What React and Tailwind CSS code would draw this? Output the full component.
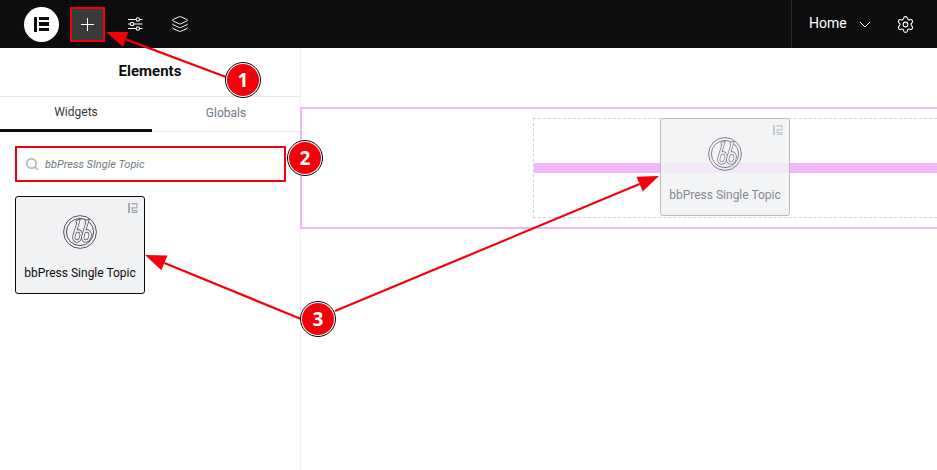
import React from 'react';
import { Layers, Search, Settings } from 'lucide-react';

const ElementorMark = () => (
  <svg width="10" height="10" viewBox="0 0 10 10" fill="#a9adb3">
    <rect x="0" y="0" width="2" height="10" />
    <path d="M3.5 0H9.5V5.5H5V7H9.5V10H3.5V8.8H8.2V8.2H3.5V4.2H8.2V1.4H3.5Z" />
  </svg>
);

const BbLogo = ({ bg = '#f1f2f4', color = '#3f4247' }) => {
  const b1 = 'M14 6.5 L15.5 6 L11 21 C9.5 27 15.5 27.5 17.5 23 C19.5 18.5 17 14.5 13 16.5';
  const b2 = 'M23 6.5 L24.5 6 L20 21 C18.5 27 24.5 27.5 26.5 23 C28.5 18.5 26 14.5 22 16.5';
  return (
    <svg width="34" height="34" viewBox="0 0 34 34" fill="none">
      <circle cx="17" cy="17" r="16.4" stroke={color} strokeWidth="0.9" />
      <circle cx="17" cy="17" r="13.6" stroke={color} strokeWidth="0.9" />
      <path d={b1} stroke={color} strokeWidth="3" strokeLinecap="round" />
      <path d={b1} stroke={bg} strokeWidth="1.7" strokeLinecap="round" />
      <path d={b2} stroke={color} strokeWidth="3" strokeLinecap="round" />
      <path d={b2} stroke={bg} strokeWidth="1.7" strokeLinecap="round" />
    </svg>
  );
};

const Arrow = ({ x1, y1, x2, y2 }) => {
  const len = Math.hypot(x2 - x1, y2 - y1);
  const ux = (x2 - x1) / len;
  const uy = (y2 - y1) / len;
  const bx = x2 - ux * 21;
  const by = y2 - uy * 21;
  const pts = `${x2},${y2} ${bx - uy * 8},${by + ux * 8} ${bx + uy * 8},${by - ux * 8}`;
  return (
    <g>
      <line x1={x1} y1={y1} x2={bx} y2={by} stroke="#f5000a" strokeWidth="2.2" />
      <polygon points={pts} fill="#f5000a" />
    </g>
  );
};

const Badge = ({ n, className }) => (
  <div className={`absolute w-9 h-9 rounded-full bg-white border border-black p-px ${className}`}>
    <div className="w-full h-full rounded-full bg-[#f5000a] flex items-center justify-center text-white font-bold text-[19px] font-['Open_Sans',sans-serif]">
      {n}
    </div>
  </div>
);

const App = () => {
  return (
    <div className="relative w-full h-[470px] overflow-hidden bg-white font-['Roboto',sans-serif]">
      <header className="h-12 bg-[#0c0d0e] flex items-center text-white">
        <div className="ml-6 w-[35px] h-[35px] rounded-full bg-white flex items-center gap-[2px] pl-[10px]">
          <div className="w-[3px] h-[15px] bg-[#0c0d0e]" />
          <div className="flex flex-col gap-[2.5px]">
            <div className="w-[10px] h-[3.3px] bg-[#0c0d0e]" />
            <div className="w-[10px] h-[3.3px] bg-[#0c0d0e]" />
            <div className="w-[10px] h-[3.3px] bg-[#0c0d0e]" />
          </div>
        </div>
        <div className="ml-[11px] w-[35px] h-[35px] bg-[#3a3a3a] border-2 border-[#f5000a] flex items-center justify-center">
          <svg width="13" height="13" viewBox="0 0 13 13" stroke="#fff" strokeWidth="1">
            <path d="M6.5 0V13M0 6.5H13" />
          </svg>
        </div>
        <div className="ml-[22px]">
          <svg width="16" height="16" viewBox="0 0 16 16" fill="none" stroke="#fff" strokeWidth="1.1" className="block">
            <path d="M1 3.5H9M12.5 3.5H15.5M1 8H3.5M7 8H15.5M1 12.5H9M12.5 12.5H15.5" />
            <circle cx="10.8" cy="3.5" r="1.7" />
            <circle cx="5.2" cy="8" r="1.7" />
            <circle cx="10.8" cy="12.5" r="1.7" />
          </svg>
        </div>
        <div className="ml-[28px]">
          <Layers size={18} strokeWidth={1.25} />
        </div>
        <div className="ml-auto h-12 w-[146px] border-l border-[#2d2e30] flex items-center">
          <span className="ml-[17px] text-sm pb-[2px]">Home</span>
          <svg width="12" height="7" viewBox="0 0 12 7" fill="none" stroke="#fff" strokeWidth="1" className="ml-[12px]">
            <path d="M1 1L6 6L11 1" />
          </svg>
          <Settings size={19} strokeWidth={1.35} className="ml-[25px]" />
        </div>
      </header>

      <div className="flex h-[422px]">
        <aside className="w-[301px] shrink-0 border-r border-[#f1f2f3]">
          <div className="h-12 flex items-center justify-center pb-[2px] text-[15px] font-bold text-[#0c0d0e]">
            Elements
          </div>
          <div className="flex h-9 border-y border-[#e6e8ea] text-xs">
            <div className="w-[152px] flex items-center justify-center pb-[2px] text-[#33373d] border-b-[3px] border-[#0c0d0e] -mb-px">
              Widgets
            </div>
            <div className="flex-1 flex items-center justify-center pb-[2px] text-[#6d7882]">Globals</div>
          </div>
          <div className="mx-[15px] mt-[14px] w-[271px] h-9 border-2 border-[#f5000a] flex items-center pl-[8px]">
            <Search size={14} strokeWidth={3.2} className="text-[#b9bcc0]" />
            <span className="ml-[6px] pt-[2px] text-[11px] italic text-[#6d7882]">bbPress SIngle Topic</span>
          </div>
          <div className="relative mx-[15px] mt-[14px] w-[130px] h-[98px] rounded-[3px] border border-[#0c0d0e] bg-[#f1f2f4] flex flex-col items-center pt-[18px]">
            <div className="absolute top-[6px] right-[6px]">
              <ElementorMark />
            </div>
            <BbLogo />
            <span className="mt-[16px] text-xs font-normal text-[#0c0d0e]">bbPress Single Topic</span>
          </div>
        </aside>

        <main className="flex-1 min-w-0 -ml-px pt-[59px]">
          <section className="h-[122px] border-y-2 border-l-2 border-[#f0b6fb] pl-[231px] pt-[9px]">
            <div className="relative h-[100px] border border-r-0 border-dashed border-[#d0d3d6] flex items-center">
              <div className="w-full h-[10px] bg-[#f0b6fb]" />
              <div className="absolute left-[126px] -top-px w-[130px] h-[98px] rounded-[3px] border border-[#b9bbbf] bg-[#f1f2f4]/85 flex flex-col items-center pt-[18px]">
                <div className="absolute top-[6px] right-[6px] opacity-60">
                  <ElementorMark />
                </div>
                <div className="opacity-70">
                  <BbLogo bg="#f1f2f4" />
                </div>
                <span className="mt-[16px] text-xs text-[#85888e]">bbPress Single Topic</span>
              </div>
            </div>
          </section>
        </main>
      </div>

      <svg width="937" height="470" className="absolute inset-0 pointer-events-none">
        <Arrow x1={226} y1={77} x2={106} y2={32} />
        <Arrow x1={301} y1={319} x2={145} y2={255} />
        <Arrow x1={335} y1={311} x2={659} y2={176} />
      </svg>
      <Badge n="1" className="left-[225px] top-[62px]" />
      <Badge n="2" className="left-[287px] top-[140px]" />
      <Badge n="3" className="left-[300px] top-[301px]" />
    </div>
  );
};

export default App;
